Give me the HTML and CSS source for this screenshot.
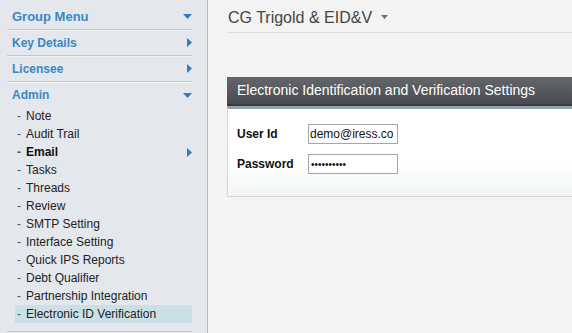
FILE: index.html
```html
<!DOCTYPE html>
<html>
<head>
<meta charset="utf-8">
<title>EID&amp;V Settings</title>
<link rel="stylesheet" href="styles.css">
</head>
<body>
<div class="layout">
  <nav class="sidebar">
    <div class="menu">
      <div class="sec sec-top"><span>Group Menu</span><svg class="tri-down" width="9" height="5" viewBox="0 0 9 5"><polygon points="0,0 9,0 4.5,5"/></svg></div>
      <div class="sec"><span>Key Details</span><svg class="tri-right" width="5" height="9" viewBox="0 0 5 9"><polygon points="0,0 5,4.5 0,9"/></svg></div>
      <div class="sec"><span>Licensee</span><svg class="tri-right" width="5" height="9" viewBox="0 0 5 9"><polygon points="0,0 5,4.5 0,9"/></svg></div>
      <div class="group">
        <div class="sec sec-open"><span>Admin</span><svg class="tri-down" width="9" height="5" viewBox="0 0 9 5"><polygon points="0,0 9,0 4.5,5"/></svg></div>
        <ul class="sub">
          <li><span class="dash">-</span>Note</li>
          <li><span class="dash">-</span>Audit Trail</li>
          <li class="strong"><span class="dash">-</span><span class="grow">Email</span><svg class="tri-right" width="5" height="9" viewBox="0 0 5 9"><polygon points="0,0 5,4.5 0,9"/></svg></li>
          <li><span class="dash">-</span>Tasks</li>
          <li><span class="dash">-</span>Threads</li>
          <li><span class="dash">-</span>Review</li>
          <li><span class="dash">-</span>SMTP Setting</li>
          <li><span class="dash">-</span>Interface Setting</li>
          <li><span class="dash">-</span>Quick IPS Reports</li>
          <li><span class="dash">-</span>Debt Qualifier</li>
          <li><span class="dash">-</span>Partnership Integration</li>
          <li class="active"><span class="dash">-</span>Electronic ID Verification</li>
        </ul>
      </div>
    </div>
  </nav>
  <main class="main">
    <div class="title">CG Trigold &amp; EID&amp;V<svg class="caret" width="7" height="4" viewBox="0 0 7 4"><polygon points="0,0 7,0 3.5,4"/></svg></div>
    <section class="panel">
      <div class="panel-head">Electronic Identification and Verification Settings</div>
      <div class="panel-body">
        <div class="row"><label class="lbl" for="uid">User Id</label><input id="uid" class="field field-text" type="text" value="demo@iress.com"></div>
        <div class="row"><label class="lbl" for="pwd">Password</label><input id="pwd" class="field field-pwd" type="password" value="abcdefghij"></div>
      </div>
    </section>
  </main>
</div>
</body>
</html>
```

FILE: styles.css
```css
html, body {
  margin: 0;
  padding: 0;
  height: 100%;
  overflow: hidden;
}
body {
  font-family: "Liberation Sans", Arial, sans-serif;
  font-size: 12px;
  background: #f3f3f3;
}
.layout {
  display: flex;
  height: 333px;
}
.sidebar {
  width: 207px;
  flex: none;
  background: #e4e7ec;
  border-right: 1px solid #b6bac0;
}
.menu {
  margin-left: 7px;
  width: 185px;
}
.sec {
  display: flex;
  align-items: center;
  justify-content: space-between;
  height: 25px;
  padding-left: 5px;
  border-bottom: 1px solid #c6c8cc;
  box-shadow: 0 1px 0 #f2f3f5;
  font-weight: bold;
  font-size: 12px;
  color: #3a88c4;
}
.sec-top {
  height: 26px;
  padding-top: 3px;
  font-size: 13px;
}
.sec-open {
  border-bottom: none;
  box-shadow: none;
}
.tri-down, .tri-right {
  fill: #2d7fc0;
  flex: none;
}
.tri-down {
  margin-top: 1px;
}
.group {
  border-bottom: 1px solid #c6c8cc;
}
.sub {
  list-style: none;
  margin: 0;
  padding: 0 0 8px;
}
.sub li {
  display: flex;
  align-items: center;
  height: 18px;
  margin-left: 8px;
  padding-left: 2px;
  color: #222;
}
.dash {
  width: 9px;
  color: #555;
  flex: none;
}
.grow {
  flex: 1;
}
.sub li.strong {
  font-weight: bold;
  color: #111;
}
.sub li.active {
  background: #cbe0e6;
}
.main {
  flex: 1;
  min-width: 0;
  padding-left: 19px;
}
.title {
  padding: 9px 0 5px 1px;
  line-height: 18px;
  font-size: 16px;
  color: #444;
  border-bottom: 1px solid #dcdcdc;
  white-space: nowrap;
}
.caret {
  fill: #707070;
  margin-left: 9px;
  vertical-align: 4px;
}
.panel {
  margin-top: 44px;
}
.panel-head {
  height: 27px;
  line-height: 27px;
  padding-left: 10px;
  font-size: 14px;
  color: #fff;
  background: linear-gradient(#64686d, #474b50);
  border-bottom: 2px solid #383b3f;
  white-space: nowrap;
}
.panel-body {
  border-top: 3px solid #92a3ad;
  border-left: 1px solid #d8d8d8;
  border-bottom: 1px solid #d8d8d8;
  background: linear-gradient(#ffffff 65%, #f0f3f5);
  padding: 15px 0 22px 9px;
  display: flex;
  flex-direction: column;
  gap: 10px;
}
.row {
  display: flex;
  align-items: center;
  height: 20px;
}
.lbl {
  width: 71px;
  font-weight: bold;
  color: #111;
}
.field {
  width: 90px;
  height: 20px;
  box-sizing: border-box;
  border: 1px solid #a6a6a6;
  padding: 0 1px;
  margin: 0;
  font-family: "Liberation Sans", Arial, sans-serif;
  font-size: 12px;
  color: #111;
  background: #fff;
  outline: none;
}
.field-text {
  padding-right: 4px;
}
.field-pwd {
  font-size: 10px;
  padding-left: 2px;
}
```
